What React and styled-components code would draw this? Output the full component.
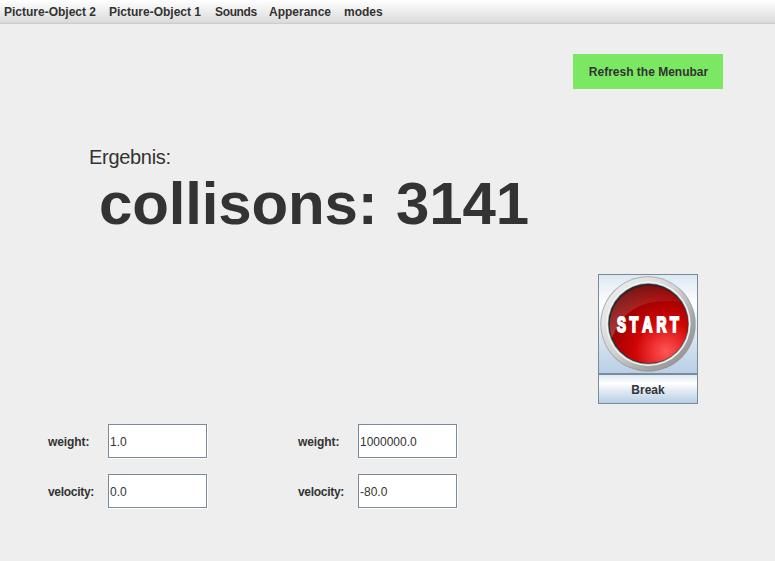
import React from "react";
import styled, { createGlobalStyle } from "styled-components";

const GlobalStyle = createGlobalStyle`
  * { box-sizing: border-box; }
  body { margin: 0; background: #eeeeee; overflow: hidden; }
  button, input { font: inherit; color: inherit; margin: 0; border-radius: 0; }
`;

const Window = styled.div`
  width: 775px;
  height: 561px;
  display: flex;
  flex-direction: column;
  background: #eeeeee;
  color: #333333;
  font: bold 12px/14px "Liberation Sans", Arial, sans-serif;
`;

const MenuBar = styled.nav`
  flex: none;
  display: flex;
  align-items: center;
  height: 24px;
  padding: 0 0 0 4px;
  border-bottom: 1px solid #cccccc;
  background: linear-gradient(#ffffff, #dadada);
`;

const MenuItem = styled.span`
  flex: none;
  width: ${(p) => p.$width}px;
  white-space: nowrap;
  letter-spacing: ${(p) => p.$spacing || 0}px;
`;

const Content = styled.main`
  flex: 1;
  display: flex;
  justify-content: space-between;
  padding: 30px 52px 0 48px;
`;

const LeftPane = styled.section`
  display: flex;
  flex-direction: column;
  padding-top: 91px;
`;

const Caption = styled.div`
  height: 24px;
  padding-left: 41px;
  font-weight: normal;
  font-size: 20px;
  line-height: 24px;
  letter-spacing: -0.3px;
`;

const Result = styled.div`
  height: 70px;
  padding-left: 51px;
  font-size: 60px;
  line-height: 70px;
  letter-spacing: -0.15px;
  word-spacing: 2px;
  white-space: nowrap;
`;

const Forms = styled.div`
  display: flex;
  gap: 150px;
  margin-top: 185px;
`;

const Form = styled.div`
  display: grid;
  grid-template-columns: 60px 99px;
  grid-auto-rows: 34px;
  row-gap: 16px;
  align-items: center;
  width: 100px;
`;

const Label = styled.label`
  padding-top: 2px;
  white-space: nowrap;
  letter-spacing: ${(p) => p.$spacing}px;
`;

const Field = styled.input`
  width: 99px;
  height: 34px;
  padding: 2px 0 0 1px;
  border: 1px solid #7a8a99;
  outline: none;
  background: #ffffff;
  box-shadow: 1px 1px 0 #ffffff;
  font-weight: normal;
`;

const RightPane = styled.section`
  display: flex;
  flex-direction: column;
  align-items: center;
`;

const RefreshButton = styled.button`
  width: 150px;
  height: 35px;
  margin-bottom: 185px;
  padding: 0 0 0 1px;
  border: 0;
  background: #7be863;
`;

const MetalButton = styled.button`
  display: flex;
  align-items: center;
  justify-content: center;
  width: 100px;
  height: ${(p) => p.$height}px;
  padding: ${(p) => p.$drop || 0}px 0 0;
  border: 1px solid #7a8a99;
  background: linear-gradient(#dde8f3, #ffffff 30%, #dde8f3 60%, #b8cfe5);
`;

const letters = [
  { char: "S", x: 617.1, width: 9 },
  { char: "T", x: 629.4, width: 8.8 },
  { char: "A", x: 642.2, width: 10.2 },
  { char: "R", x: 656.6, width: 10 },
  { char: "T", x: 670, width: 8.8 },
];

function StartIcon() {
  return (
    <svg width="98" height="98" viewBox="599 275 98 98">
      <defs>
        <linearGradient id="rim" x1="0.15" y1="0.1" x2="0.85" y2="0.9">
          <stop offset="0" stopColor="#a8a8a8" />
          <stop offset="0.4" stopColor="#b4b4b4" />
          <stop offset="1" stopColor="#949494" />
        </linearGradient>
        <linearGradient id="bevel" x1="0.1" y1="0.1" x2="0.9" y2="0.9">
          <stop offset="0" stopColor="#eeeeee" />
          <stop offset="0.45" stopColor="#d4d4d4" />
          <stop offset="0.8" stopColor="#a2a2a2" />
          <stop offset="1" stopColor="#989898" />
        </linearGradient>
        <radialGradient id="red" cx="0.72" cy="0.85" r="0.92">
          <stop offset="0" stopColor="#ff5656" />
          <stop offset="0.2" stopColor="#ee3030" />
          <stop offset="0.42" stopColor="#d00606" />
          <stop offset="0.7" stopColor="#a80000" />
          <stop offset="1" stopColor="#650000" />
        </radialGradient>
        <linearGradient id="gloss" x1="0" y1="1" x2="0.8" y2="0">
          <stop offset="0" stopColor="#ffffff" stopOpacity="0.22" />
          <stop offset="1" stopColor="#ffffff" stopOpacity="0.05" />
        </linearGradient>
      </defs>
      <circle cx="648" cy="324" r="47.7" fill="url(#rim)" />
      <circle cx="647.8" cy="323.8" r="46.5" fill="url(#bevel)" />
      <circle cx="648.4" cy="323.8" r="42.2" fill="#f2f6f6" />
      <circle cx="648.4" cy="323.8" r="40.7" fill="#8fa5a5" />
      <circle cx="648.4" cy="323.8" r="40" fill="#203030" />
      <circle cx="648.8" cy="324.1" r="39.2" fill="url(#red)" />
      <path d="M612 338A39 39 0 0 1 676 297L681 302Q627 295 612 338Z" fill="url(#gloss)" />
      <g fill="#ffffff" stroke="#ffffff" strokeWidth="2" fontSize="22" fontWeight="bold">
        {letters.map((l) => (
          <text
            key={l.x}
            x={l.x}
            y="332"
            textLength={l.width}
            lengthAdjust="spacingAndGlyphs"
          >
            {l.char}
          </text>
        ))}
      </g>
    </svg>
  );
}

const menus = [
  ["Picture-Object 2", 105],
  ["Picture-Object 1", 106],
  ["Sounds", 54, -0.35],
  ["Apperance", 75],
  ["modes", 50],
];

const objects = [
  { weight: "1.0", velocity: "0.0" },
  { weight: "1000000.0", velocity: "-80.0" },
];

export default function App() {
  return (
    <Window>
      <GlobalStyle />
      <MenuBar>
        {menus.map(([name, width, spacing]) => (
          <MenuItem key={name} $width={width} $spacing={spacing}>{name}</MenuItem>
        ))}
      </MenuBar>
      <Content>
        <LeftPane>
          <Caption>Ergebnis:</Caption>
          <Result>collisons: 3141</Result>
          <Forms>
            {objects.map((o, i) => (
              <Form key={i}>
                <Label $spacing={-0.1}>weight:</Label>
                <Field defaultValue={o.weight} />
                <Label $spacing={-0.3}>velocity:</Label>
                <Field defaultValue={o.velocity} />
              </Form>
            ))}
          </Forms>
        </LeftPane>
        <RightPane>
          <RefreshButton>Refresh the Menubar</RefreshButton>
          <MetalButton $height={100} aria-label="START">
            <StartIcon />
          </MetalButton>
          <MetalButton $height={30} $drop={2}>Break</MetalButton>
        </RightPane>
      </Content>
    </Window>
  );
}
